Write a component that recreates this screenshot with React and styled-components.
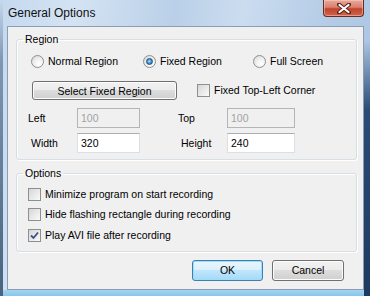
import React from "react";
import styled, { createGlobalStyle } from "styled-components";

const GlobalStyle = createGlobalStyle`
  html, body {
    margin: 0;
    padding: 0;
    background: #ffffff;
  }
  body {
    font-family: "Liberation Sans", Arial, sans-serif;
    font-size: 10.5px;
    color: #000;
  }
`;

const Window = styled.div`
  width: 370px;
  height: 296px;
  box-sizing: border-box;
  display: flex;
  flex-direction: column;
  padding: 0 6px 6px 7px;
  background:
    linear-gradient(to bottom, rgba(36, 66, 106, 0) 0, rgba(36, 66, 106, 0) 40px, #2a4b76 110px, #1d3a60 100%) right top / 6px 100% no-repeat,
    linear-gradient(to bottom, rgba(70, 95, 125, 0) 0, #7f97b2 60px, #48627f 100%) left top / 3px 100% no-repeat,
    linear-gradient(to bottom, #a3d3ef, #86c6ea) left bottom / 100% 6px no-repeat,
    linear-gradient(100deg, #c4d8ee 0%, #d4e3f3 18%, #bad0e8 42%, #cbdcef 58%, #b3cbe6 80%, #a7c2e0 100%);
`;

const TitleBar = styled.div`
  height: 26px;
  display: flex;
  justify-content: space-between;
  align-items: flex-start;
`;

const Title = styled.span`
  align-self: center;
  padding-left: 1px;
  font-family: "Liberation Sans", Arial, sans-serif;
  font-size: 12px;
  color: #111;
`;

const CloseButton = styled.div`
  width: 41px;
  height: 17px;
  box-sizing: border-box;
  border: 1px solid #6b2a20;
  border-top: none;
  border-radius: 0 0 4px 4px;
  background: linear-gradient(to bottom, #e9a99b 0%, #d98070 45%, #c2432c 55%, #d0634a 100%);
  box-shadow: inset 0 0 0 1px rgba(255, 220, 210, 0.45);
  display: flex;
  align-items: center;
  justify-content: center;
`;

const Client = styled.div`
  flex: 1;
  display: flex;
  flex-direction: column;
  background: #f0f0f0;
  border: 1px solid #8b9db2;
  padding: 3px 6px 0 8px;
`;

const Group = styled.fieldset`
  margin: ${(p) => p.$top}px 0 0 0;
  padding: 0;
  border: 1px solid #d5dfe5;
  border-radius: 3px;
  box-shadow: inset 1px 1px 0 #ffffff, 1px 1px 0 #ffffff;
  min-width: 0;
`;

const Legend = styled.legend`
  margin-left: 6px;
  padding: 0 2px;
  line-height: 12px;
  font-size: 10.5px;
  color: #000;
`;

const GroupBody = styled.div`
  display: flex;
  flex-direction: column;
  padding: ${(p) => p.$pad};
`;

const RadioRow = styled.div`
  display: grid;
  grid-template-columns: 112px 110px auto;
  padding-left: 14px;
  margin-top: 10px;
`;

const Choice = styled.label`
  display: flex;
  align-items: center;
  gap: 4px;
  height: 13px;
  line-height: 13px;
  white-space: nowrap;
`;

const RadioDot = styled.span`
  width: 13px;
  height: 13px;
  box-sizing: border-box;
  border-radius: 50%;
  border: 1px solid #8e8f8f;
  background: radial-gradient(circle at 65% 70%, #ffffff 0%, #f2f2f2 40%, #d4d4d4 100%);
  display: flex;
  align-items: center;
  justify-content: center;
  flex: none;

  &::after {
    content: "";
    display: ${(p) => (p.$on ? "block" : "none")};
    width: 7px;
    height: 7px;
    box-sizing: border-box;
    border-radius: 50%;
    border: 1px solid #1f4d80;
    background: radial-gradient(circle at 45% 45%, #b8e2fb 0%, #4a9ad8 45%, #1a5a9c 100%);
  }
`;

const CheckBox = styled.span`
  width: 13px;
  height: 13px;
  box-sizing: border-box;
  border: 1px solid #8e8f8f;
  background: linear-gradient(135deg, #d6d6d6 0%, #e8e8e8 50%, #fafafa 100%);
  display: flex;
  align-items: center;
  justify-content: center;
  flex: none;
`;

const ActionRow = styled.div`
  display: flex;
  align-items: center;
  gap: 20px;
  margin: 13px 0 0 15px;
`;

const PushButton = styled.button`
  width: ${(p) => p.$w}px;
  height: ${(p) => p.$h}px;
  padding: 0;
  font-family: "Liberation Sans", Arial, sans-serif;
  font-size: 10.5px;
  color: #000;
  border: 1px solid ${(p) => (p.$def ? "#3c7fb1" : "#707070")};
  border-radius: 3px;
  background: ${(p) =>
    p.$def
      ? "linear-gradient(to bottom, #eaf6fd 0%, #d9f0fc 50%, #bee6fd 50%, #a7d9f5 100%)"
      : "linear-gradient(to bottom, #f2f2f2 0%, #ebebeb 50%, #dddddd 50%, #cfcfcf 100%)"};
  box-shadow: inset 0 0 0 1px ${(p) => (p.$def ? "#9fdcfb" : "#fcfcfc")};
`;

const FieldRow = styled.div`
  display: grid;
  grid-template-columns: 49px 63px 38px 49px 68px;
  align-items: center;
  height: 20px;
  margin-top: ${(p) => p.$gap}px;
  padding-left: 11px;
`;

const FieldLabel = styled.span`
  padding-left: ${(p) => p.$indent}px;
`;

const TextBox = styled.div`
  height: 20px;
  box-sizing: border-box;
  display: flex;
  align-items: center;
  padding: 0 3px;
  border: 1px solid ${(p) => (p.$disabled ? "#b5b5b5" : "#dbdfe6")};
  border-top-color: ${(p) => (p.$disabled ? "#b5b5b5" : "#abadb3")};
  background: ${(p) => (p.$disabled ? "#f0f0f0" : "#ffffff")};
  color: ${(p) => (p.$disabled ? "#a2a2a2" : "#000")};
`;

const CheckList = styled.div`
  display: flex;
  flex-direction: column;
  padding-left: 11px;
`;

const CheckLine = styled.div`
  height: 20.5px;
  display: flex;
  align-items: center;
`;

const Footer = styled.div`
  display: flex;
  justify-content: flex-end;
  gap: 9px;
  padding: 8px 13px 0 0;
`;

const CloseGlyph = () => (
  <svg width="14" height="11" viewBox="0 0 14 11">
    <path d="M2 1.5 L12 9.5 M12 1.5 L2 9.5" stroke="#5a2218" strokeWidth="4" strokeLinecap="round" />
    <path d="M2.5 2 L11.5 9 M11.5 2 L2.5 9" stroke="#ffffff" strokeWidth="2.2" strokeLinecap="round" />
  </svg>
);

const CheckMark = () => (
  <svg width="9" height="9" viewBox="0 0 9 9">
    <path d="M1 4.5 L3.5 7 L8 1.5" fill="none" stroke="#3d4f8c" strokeWidth="1.8" />
  </svg>
);

const Radio = ({ on, children }) => (
  <Choice>
    <RadioDot $on={on} />
    {children}
  </Choice>
);

const Check = ({ on, children }) => (
  <Choice>
    <CheckBox>{on && <CheckMark />}</CheckBox>
    {children}
  </Choice>
);

const options = [
  { text: "Minimize program on start recording", on: false },
  { text: "Hide flashing rectangle during recording", on: false },
  { text: "Play AVI file after recording", on: true },
];

export default function App() {
  return (
    <>
      <GlobalStyle />
      <Window>
        <TitleBar>
          <Title>General Options</Title>
          <CloseButton>
            <CloseGlyph />
          </CloseButton>
        </TitleBar>
        <Client>
          <Group $top={3}>
            <Legend>Region</Legend>
            <GroupBody $pad="0 0 6px 0">
              <RadioRow>
                <Radio>Normal Region</Radio>
                <Radio on>Fixed Region</Radio>
                <Radio>Full Screen</Radio>
              </RadioRow>
              <ActionRow>
                <PushButton $w={145} $h={19}>Select Fixed Region</PushButton>
                <Check>Fixed Top-Left Corner</Check>
              </ActionRow>
              <FieldRow $gap={8}>
                <FieldLabel $indent={0}>Left</FieldLabel>
                <TextBox $disabled>100</TextBox>
                <span />
                <FieldLabel $indent={0}>Top</FieldLabel>
                <TextBox $disabled>100</TextBox>
              </FieldRow>
              <FieldRow $gap={5}>
                <FieldLabel $indent={3}>Width</FieldLabel>
                <TextBox>320</TextBox>
                <span />
                <FieldLabel $indent={3}>Height</FieldLabel>
                <TextBox>240</TextBox>
              </FieldRow>
            </GroupBody>
          </Group>
          <Group $top={7}>
            <Legend>Options</Legend>
            <GroupBody $pad="5px 0 5px 0">
              <CheckList>
                {options.map((o) => (
                  <CheckLine key={o.text}>
                    <Check on={o.on}>{o.text}</Check>
                  </CheckLine>
                ))}
              </CheckList>
            </GroupBody>
          </Group>
          <Footer>
            <PushButton $w={71} $h={21} $def>OK</PushButton>
            <PushButton $w={72} $h={21}>Cancel</PushButton>
          </Footer>
        </Client>
      </Window>
    </>
  );
}
